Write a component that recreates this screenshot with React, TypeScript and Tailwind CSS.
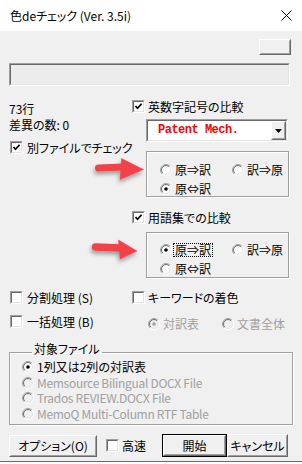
import React from "react";

function Check({ checked }: { checked?: boolean }) {
  return (
    <span className="w-[13px] h-[13px] shrink-0 flex border border-t-[#a0a0a0] border-l-[#a0a0a0] border-r-white border-b-white">
      <span className="flex-1 flex items-center justify-center bg-white border border-t-[#696969] border-l-[#696969] border-r-[#e3e3e3] border-b-[#e3e3e3]">
        {checked && (
          <svg width="9" height="9" viewBox="0 0 9 9">
            <path d="M1.5 4 L3.5 6.3 L7.6 1.8" stroke="#000" strokeWidth="1.7" fill="none" />
          </svg>
        )}
      </span>
    </span>
  );
}

function Radio({ on, disabled }: { on?: boolean; disabled?: boolean }) {
  const a = 6 - 5.5 * 0.7071;
  const b = 6 + 5.5 * 0.7071;
  const c = 6 - 4.5 * 0.7071;
  const d = 6 + 4.5 * 0.7071;
  return (
    <svg width="12" height="12" viewBox="0 0 12 12" className="shrink-0">
      <circle cx="6" cy="6" r="5" fill={disabled ? "#f0f0f0" : "#fff"} />
      <path d={`M${a} ${b} A5.5 5.5 0 0 1 ${b} ${a}`} stroke="#a0a0a0" fill="none" />
      <path d={`M${b} ${a} A5.5 5.5 0 0 1 ${a} ${b}`} stroke="#ffffff" fill="none" />
      <path d={`M${c} ${d} A4.5 4.5 0 0 1 ${d} ${c}`} stroke="#696969" fill="none" />
      <path d={`M${d} ${c} A4.5 4.5 0 0 1 ${c} ${d}`} stroke="#e3e3e3" fill="none" />
      {on && <circle cx="6" cy="6" r="1.8" fill={disabled ? "#a0a0a0" : "#000"} />}
    </svg>
  );
}

function RadioItem({
  label,
  on,
  disabled,
  focus,
  tight,
}: {
  label: string;
  on?: boolean;
  disabled?: boolean;
  focus?: boolean;
  tight?: boolean;
}) {
  return (
    <div className="flex items-center h-[13px]">
      <Radio on={on} disabled={disabled} />
      <span
        className={
          "ml-[1px] px-[1px] leading-[12px] border border-dotted whitespace-nowrap " +
          (focus ? "border-black" : "border-transparent") +
          (disabled ? " text-[#a0a0a0]" : "") +
          (tight ? " tracking-[-0.3px]" : "")
        }
      >
        {label}
      </span>
    </div>
  );
}

function Btn({
  children,
  className,
  def,
}: {
  children: React.ReactNode;
  className?: string;
  def?: boolean;
}) {
  const body = (
    <div className="h-full flex border border-t-white border-l-white border-r-[#696969] border-b-[#696969]">
      <div className="flex-1 flex items-center justify-center border border-t-[#f0f0f0] border-l-[#f0f0f0] border-r-[#a0a0a0] border-b-[#a0a0a0] whitespace-nowrap">
        {children}
      </div>
    </div>
  );
  return (
    <div className={"bg-[#f0f0f0] " + (def ? "border border-black " : "") + (className ?? "")}>
      {body}
    </div>
  );
}

function Arrows() {
  return (
    <svg
      className="absolute left-0 top-0 pointer-events-none"
      width="302"
      height="464"
      viewBox="0 0 302 464"
    >
      <defs>
        <filter id="sh" x="-50%" y="-50%" width="200%" height="200%">
          <feDropShadow dx="-1" dy="3" stdDeviation="2" floodColor="#000" floodOpacity="0.35" />
        </filter>
      </defs>
      <g filter="url(#sh)" fill="#f2434a" stroke="#f2434a">
        <line x1="98.5" y1="168" x2="124" y2="167" strokeWidth="7" strokeLinecap="round" />
        <polygon points="121.5,158.5 143.5,169.5 120,179.5" strokeWidth="0.5" strokeLinejoin="round" />
      </g>
      <g filter="url(#sh)" fill="#f2434a" stroke="#f2434a">
        <line x1="95.5" y1="247" x2="120" y2="248" strokeWidth="7.5" strokeLinecap="round" />
        <polygon points="118.5,240 137,251 120,259" strokeWidth="0.5" strokeLinejoin="round" />
      </g>
    </svg>
  );
}

export default function App() {
  return (
    <div className="w-[302px] h-[464px] bg-white relative overflow-hidden font-['Noto_Sans_CJK_JP','Liberation_Sans',sans-serif] text-[12px] text-black [font-feature-settings:'palt']">
      {/* title bar */}
      <div className="h-[31px] flex items-center pl-[10px] pr-[10px] bg-white">
        <span className="text-[12px] leading-[16px]">色deチェック (Ver. 3.5i)</span>
        <svg className="ml-auto" width="11" height="11" viewBox="0 0 11 11">
          <path d="M0.5 0.5 L10.5 10.5 M10.5 0.5 L0.5 10.5" stroke="#000" strokeWidth="1" />
        </svg>
      </div>

      {/* body */}
      <div className="h-[430px] bg-[#f0f0f0] flex flex-col">
        <div className="flex justify-end pr-[11px] pt-[8px]">
          <Btn className="w-[32px] h-[16px]">{""}</Btn>
        </div>
        <div className="ml-[9px] mr-[12px] mt-[8px] h-[23px] flex border border-t-[#a0a0a0] border-l-[#a0a0a0] border-r-white border-b-white">
          <div className="flex-1 bg-[#ececec] border border-t-[#696969] border-l-[#696969] border-r-[#e3e3e3] border-b-[#e3e3e3]" />
        </div>

        {/* main columns */}
        <div className="flex mt-[14px]">
          <div className="w-[132px] pl-[9px] flex flex-col">
            <div className="leading-[16px] mt-[1px]">73行</div>
            <div className="leading-[16px]">差異の数: 0</div>
            <div className="flex items-center mt-[8px] ml-[1px] h-[13px]">
              <Check checked />
              <span className="ml-[4px] whitespace-nowrap">別ファイルでチェック</span>
            </div>
          </div>
          <div className="flex-1 flex flex-col">
            <div className="flex items-center h-[13px]">
              <Check checked />
              <span className="ml-[3px] whitespace-nowrap">英数字記号の比較</span>
            </div>
            <div className="mt-[6px] ml-[14px] w-[142px] h-[23px] flex border border-t-[#a0a0a0] border-l-[#a0a0a0] border-r-white border-b-white">
              <div className="flex-1 flex bg-white border border-t-[#696969] border-l-[#696969] border-r-[#e3e3e3] border-b-[#e3e3e3]">
                <div className="flex-1 flex items-center pl-[10px] pb-[2px] font-['Liberation_Mono',monospace] font-bold text-[12px] tracking-[-0.5px] text-[#ff0000] whitespace-pre">
                  Patent Mech.
                </div>
                <Btn className="w-[15px] h-full">
                  <svg width="7" height="4" viewBox="0 0 7 4">
                    <polygon points="0,0 7,0 3.5,4" fill="#000" />
                  </svg>
                </Btn>
              </div>
            </div>
            <div className="mt-[9px] ml-[14px] w-[143px] h-[46px] border border-[#a0a0a0] shadow-[inset_1px_1px_0_#fff,1px_1px_0_#fff] pt-[11px] pl-[13px] flex flex-col gap-y-[6px]">
              <div className="flex">
                <div className="w-[72px]">
                  <RadioItem label="原⇒訳" />
                </div>
                <RadioItem label="訳⇒原" />
              </div>
              <RadioItem label="原⇔訳" on />
            </div>
            <div className="flex items-center h-[13px] mt-[14px]">
              <Check checked />
              <span className="ml-[3px] whitespace-nowrap">用語集での比較</span>
            </div>
            <div className="mt-[8px] ml-[14px] w-[143px] h-[46px] border border-[#a0a0a0] shadow-[inset_1px_1px_0_#fff,1px_1px_0_#fff] pt-[10px] pl-[13px] flex flex-col gap-y-[6px]">
              <div className="flex">
                <div className="w-[72px]">
                  <RadioItem label="原⇒訳" on focus />
                </div>
                <RadioItem label="訳⇒原" />
              </div>
              <RadioItem label="原⇔訳" />
            </div>
          </div>
        </div>

        {/* second section */}
        <div className="flex mt-[13px]">
          <div className="w-[132px] pl-[10px] flex flex-col">
            <div className="flex items-center h-[13px]">
              <Check />
              <span className="ml-[4px] whitespace-nowrap">分割処理 (S)</span>
            </div>
            <div className="flex items-center h-[13px] mt-[11px]">
              <Check />
              <span className="ml-[4px] whitespace-nowrap">一括処理 (B)</span>
            </div>
          </div>
          <div className="flex-1 flex flex-col">
            <div className="flex items-center h-[13px]">
              <Check />
              <span className="ml-[3px] whitespace-nowrap">キーワードの着色</span>
            </div>
            <div className="flex mt-[13px] ml-[16px]">
              <div className="w-[74px]">
                <RadioItem label="対訳表" on disabled />
              </div>
              <RadioItem label="文書全体" disabled />
            </div>
          </div>
        </div>

        {/* target file group */}
        <fieldset className="mx-[9px] mt-[13px] border border-[#a0a0a0] shadow-[inset_1px_1px_0_#fff,1px_1px_0_#fff] pl-[12px] pb-[2px]">
          <legend className="ml-[10px] px-[2px] leading-[12px] pb-[6px] whitespace-nowrap">対象ファイル</legend>
          <div className="flex flex-col mt-[-2px]">
            <div className="h-[16px] flex items-center">
              <RadioItem label="1列又は2列の対訳表" on />
            </div>
            <div className="h-[15px] flex items-center">
              <RadioItem label="Memsource Bilingual DOCX File" disabled tight />
            </div>
            <div className="h-[16px] flex items-center">
              <RadioItem label="Trados REVIEW.DOCX File" disabled tight />
            </div>
            <div className="h-[16px] flex items-center">
              <RadioItem label="MemoQ Multi-Column RTF Table" disabled tight />
            </div>
          </div>
        </fieldset>

        {/* bottom buttons */}
        <div className="flex items-center mt-[9px] pl-[9px]">
          <Btn className="w-[88px] h-[22px]">オプション(O)</Btn>
          <div className="flex items-center ml-[9px] w-[56px]">
            <Check />
            <span className="ml-[3px]">高速</span>
          </div>
          <Btn def className="w-[65px] h-[23px]">開始</Btn>
          <Btn className="w-[61px] h-[23px]">キャンセル</Btn>
        </div>
      </div>
      <div className="h-[1px] bg-[#6b6b6b]" />
      <Arrows />
    </div>
  );
}
